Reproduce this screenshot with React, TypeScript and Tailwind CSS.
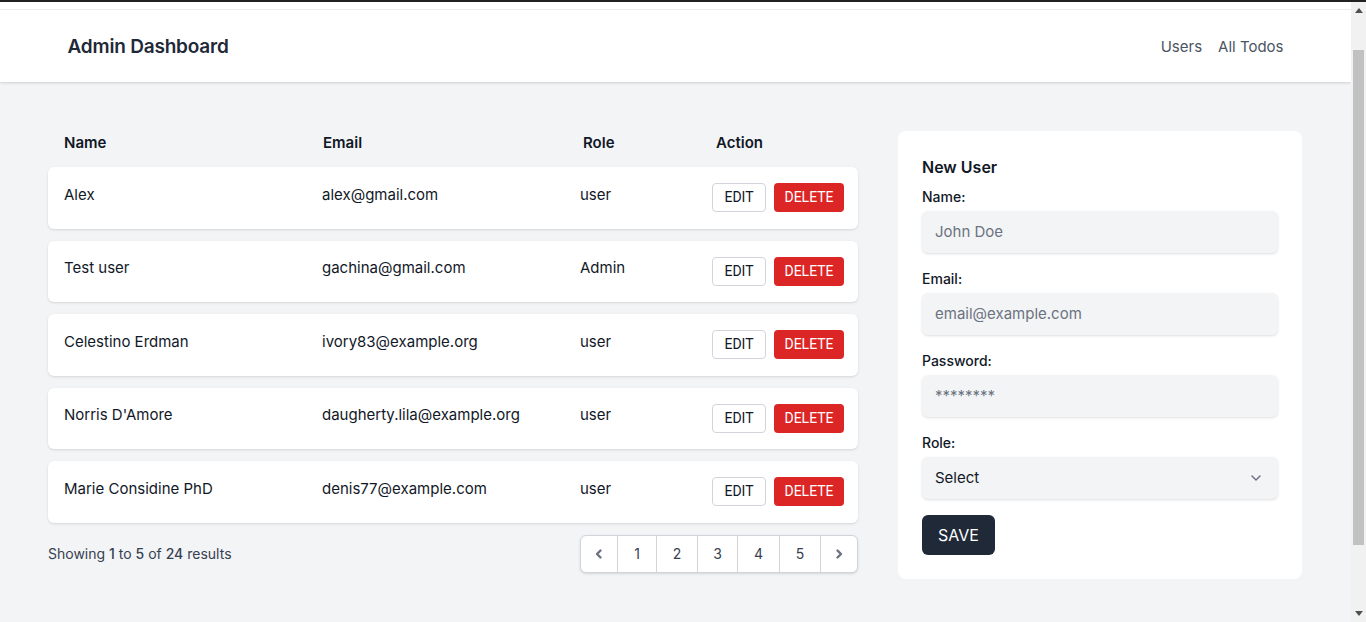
import React from "react";

const users = [
  { name: "Alex", email: "alex@gmail.com", role: "user" },
  { name: "Test user", email: "gachina@gmail.com", role: "Admin" },
  { name: "Celestino Erdman", email: "ivory83@example.org", role: "user" },
  { name: "Norris D'Amore", email: "daugherty.lila@example.org", role: "user" },
  { name: "Marie Considine PhD", email: "denis77@example.com", role: "user" },
];

function ChevronLeft() {
  return (
    <svg width="14" height="14" viewBox="0 0 14 14" fill="none" stroke="currentColor" strokeWidth="2.4" strokeLinecap="round" strokeLinejoin="round">
      <path d="M8.5 3.5L5 7l3.5 3.5" />
    </svg>
  );
}

function ChevronRight() {
  return (
    <svg width="14" height="14" viewBox="0 0 14 14" fill="none" stroke="currentColor" strokeWidth="2.4" strokeLinecap="round" strokeLinejoin="round">
      <path d="M5.5 3.5L9 7l-3.5 3.5" />
    </svg>
  );
}

function Field({ label, placeholder }: { label: string; placeholder: string }) {
  return (
    <div className="mb-4">
      <div className="text-sm font-medium leading-5 text-[#111827]">{label}</div>
      <div className="mt-1 h-[42px] rounded-md bg-[#f3f4f6] shadow-sm flex items-center px-[13px] text-[15px] text-[#6b7280]">
        {placeholder}
      </div>
    </div>
  );
}

function Scrollbar() {
  return (
    <div className="w-[15px] shrink-0 bg-[#f1f1f1] flex flex-col items-center">
      <div className="h-[17px] flex items-center justify-center">
        <svg width="8" height="5" viewBox="0 0 8 5"><path d="M4 0L8 5H0z" fill="#505050" /></svg>
      </div>
      <div className="h-[31px]" />
      <div className="w-[11px] h-[495px] bg-[#c1c1c1]" />
      <div className="flex-1" />
      <div className="h-[17px] flex items-center justify-center">
        <svg width="8" height="5" viewBox="0 0 8 5"><path d="M0 0h8L4 5z" fill="#505050" /></svg>
      </div>
    </div>
  );
}

export default function App() {
  return (
    <div className="h-[622px] overflow-hidden flex flex-col" style={{ fontFamily: "Inter, 'Noto Sans', sans-serif" }}>
      <div className="h-[2px] shrink-0 bg-[#222]" />
      <div className="flex flex-1 min-h-0">
        <div className="w-[1351px] shrink-0 bg-[#f3f4f6]">
          <header className="bg-white shadow-[0_1px_3px_rgba(0,0,0,0.1),0_1px_2px_rgba(0,0,0,0.06)]">
            <div className="h-[8px] border-b border-[#ececec]" />
            <div className="max-w-7xl mx-auto px-8 h-[72px] pt-[2px] flex items-center justify-between">
              <div className="text-[19px] font-semibold text-[#1f2937] tracking-[-0.2px]">Admin Dashboard</div>
              <nav className="flex items-center gap-4 text-[15px] text-[#4b5563]">
                <span>Users</span>
                <span>All Todos</span>
              </nav>
            </div>
          </header>

          <main className="px-12 pt-12 grid grid-cols-[810px_404px] gap-10">
            <section>
              <div className="flex flex-col gap-3">
                <div className="grid grid-cols-[259px_260px_133px_1fr] px-4 h-[25px] pt-[1px] items-start text-[15px] font-semibold text-[#111827] leading-6">
                  <div>Name</div>
                  <div>Email</div>
                  <div>Role</div>
                  <div>Action</div>
                </div>
                {users.map((u) => (
                  <div key={u.email} className="h-[61.5px] bg-white rounded-md shadow-sm grid grid-cols-[258px_258px_132px_1fr] px-4 items-center text-[15px] text-[#111827]">
                    <div className="mb-[6px]">{u.name}</div>
                    <div className="mb-[6px]">{u.email}</div>
                    <div className="mb-[6px]">{u.role}</div>
                    <div className="flex gap-2" style={{ fontFamily: "Roboto, sans-serif" }}>
                      <button className="h-[29px] w-[54px] rounded border border-[#d1d5db] bg-white text-[14px] text-[#111827]">EDIT</button>
                      <button className="h-[29px] w-[70px] rounded bg-[#dc2626] text-[14px] text-white">DELETE</button>
                    </div>
                  </div>
                ))}
              </div>
              <div className="mt-3 flex items-center justify-between">
                <div className="text-sm text-[#374151]">
                  Showing <span className="font-medium">1</span> to <span className="font-medium">5</span> of{" "}
                  <span className="font-medium">24</span> results
                </div>
                <div className="flex h-[38px] rounded-md border border-[#d1d5db] bg-white shadow-sm text-sm text-[#374151]">
                  <div className="w-[37px] flex items-center justify-center text-[#6b7280] border-r border-[#d1d5db]"><ChevronLeft /></div>
                  <div className="w-[39px] flex items-center justify-center border-r border-[#d1d5db]">1</div>
                  <div className="w-[41px] flex items-center justify-center border-r border-[#d1d5db]">2</div>
                  <div className="w-[40px] flex items-center justify-center border-r border-[#d1d5db]">3</div>
                  <div className="w-[42px] flex items-center justify-center border-r border-[#d1d5db]">4</div>
                  <div className="w-[41px] flex items-center justify-center border-r border-[#d1d5db]">5</div>
                  <div className="w-[36px] flex items-center justify-center text-[#6b7280]"><ChevronRight /></div>
                </div>
              </div>
            </section>

            <aside className="self-start mt-[1px] bg-white rounded-lg px-6 pt-6 pb-6">
              <div className="text-base font-semibold leading-6 text-[#111827] mb-2">New User</div>
              <Field label="Name:" placeholder="John Doe" />
              <Field label="Email:" placeholder="email@example.com" />
              <Field label="Password:" placeholder="********" />
              <div className="mb-4">
                <div className="text-sm font-medium leading-5 text-[#111827]">Role:</div>
                <div className="mt-1 h-[42px] rounded-md bg-[#f3f4f6] shadow-sm flex items-center justify-between pl-[13px] pr-[12px] text-[15px] text-[#111827]">
                  <span>Select</span>
                  <svg width="20" height="20" viewBox="0 0 20 20" fill="none" stroke="#6b7280" strokeWidth="1.5" strokeLinecap="round" strokeLinejoin="round">
                    <path d="M6 8l4 4 4-4" />
                  </svg>
                </div>
              </div>
              <button className="h-[40px] w-[73px] rounded-md bg-[#1f2937] text-white text-base">SAVE</button>
            </aside>
          </main>
        </div>
        <Scrollbar />
      </div>
    </div>
  );
}
